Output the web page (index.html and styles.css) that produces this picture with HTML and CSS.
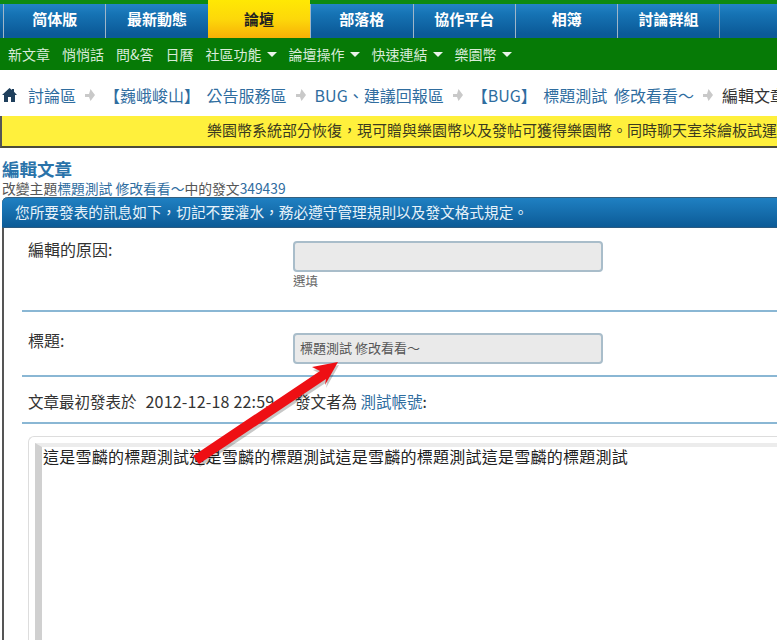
FILE: index.html
```html
<!DOCTYPE html>
<html lang="zh-Hant">
<head>
<meta charset="utf-8">
<title>編輯文章</title>
<link rel="stylesheet" href="styles.css">
</head>
<body>
<div class="page">
  <nav class="tabs">
    <a class="tab">简体版</a>
    <a class="tab">最新動態</a>
    <a class="tab tab-active">論壇</a>
    <a class="tab">部落格</a>
    <a class="tab">協作平台</a>
    <a class="tab">相簿</a>
    <a class="tab">討論群組</a>
  </nav>
  <nav class="subnav">
    <a>新文章</a>
    <a>悄悄話</a>
    <a>問&amp;答</a>
    <a>日曆</a>
    <a class="menu">社區功能<i class="caret"></i></a>
    <a class="menu">論壇操作<i class="caret"></i></a>
    <a class="menu">快速連結<i class="caret"></i></a>
    <a class="menu">樂園幣<i class="caret"></i></a>
  </nav>
  <div class="crumbs">
    <svg class="home" width="15" height="14" viewBox="0 0 15 14"><path d="M7.5 0 0 7h2v7h4V9h3v5h4V7h2L12 3.8V1h-2v1z" fill="#1f3f5c"/></svg>
    <a class="first">討論區</a>
    <svg class="sep" width="10" height="12" viewBox="0 0 10 12"><path d="M5.5 0 10 6l-4.500 6-1.500-4H0V5h4z" fill="#c9c9c9"/></svg>
    <a>【巍峨峻山】 公告服務區</a>
    <svg class="sep" width="10" height="12" viewBox="0 0 10 12"><path d="M5.500 0 10 6l-4.500 6-1.500-4H0V5h4z" fill="#c9c9c9"/></svg>
    <a>BUG、建議回報區</a>
    <svg class="sep sep-wide" width="10" height="12" viewBox="0 0 10 12"><path d="M5.500 0 10 6l-4.500 6-1.500-4H0V5h4z" fill="#c9c9c9"/></svg>
    <a>【BUG】 標題測試 修改看看～</a>
    <svg class="sep" width="10" height="12" viewBox="0 0 10 12"><path d="M5.500 0 10 6l-4.500 6-1.500-4H0V5h4z" fill="#c9c9c9"/></svg>
    <span class="current">編輯文章</span>
  </div>
  <div class="notice">樂園幣系統部分恢復，現可贈與樂園幣以及發帖可獲得樂園幣。同時聊天室茶繪板試運</div>
  <h1 class="title">編輯文章</h1>
  <p class="subtitle">改變主題<a>標題測試 修改看看～</a>中的發文<a>349439</a></p>
  <section class="panel">
    <header class="panel-head">您所要發表的訊息如下，切記不要灌水，務必遵守管理規則以及發文格式規定。</header>
    <div class="panel-body">
      <div class="row row-reason">
        <label class="row-label">編輯的原因:</label>
        <div class="field-wrap">
          <div class="field"></div>
          <div class="hint">選填</div>
        </div>
      </div>
      <div class="row row-title">
        <label class="row-label">標題:</label>
        <div class="field-wrap">
          <div class="field field-text">標題測試 修改看看～</div>
        </div>
      </div>
      <div class="row row-meta">
        <span class="meta-date">文章最初發表於<span class="date-val">2012-12-18 22:59</span></span>
        <span>發文者為 <a>測試帳號</a>:</span>
      </div>
      <div class="editor">
        <div class="editor-inner">這是雪麟的標題測試這是雪麟的標題測試這是雪麟的標題測試這是雪麟的標題測試</div>
      </div>
    </div>
  </section>
  <svg class="arrow" width="777" height="640" viewBox="0 0 777 640">
    <g fill="#000" opacity=".22" transform="translate(1 3)">
      <path d="M193 456 320 371 312 367 338 362 325 385 326 379 199 464z"/>
    </g>
    <path d="M193 456 320 371 312 367 338 362 325 385 326 379 199 464z" fill="#ee0f14"/>
  </svg>
</div>
</body>
</html>
```
FILE: styles.css
```css
* { box-sizing: border-box; }
html, body { margin: 0; padding: 0; background: #fff; }
body {
  font-family: "Noto Sans CJK TC", "Liberation Sans", sans-serif;
  color: #333;
  overflow: hidden;
}
.page { position: relative; width: 777px; height: 640px; overflow: hidden; }
a { color: #2a6a9e; text-decoration: none; }

.tabs {
  display: flex;
  height: 38px;
  padding: 4px 0 0 3px;
  background: linear-gradient(#0e8a12 0, #0e8a12 4px, #2284c6 4px, #1673b4 14px, #0b5a98 34px, #0b5a98 100%);
}
.tab {
  width: 102.4px;
  height: 34px;
  border-left: 1px solid #9fb6c8;
  color: #fff;
  font-size: 15px;
  font-weight: 700;
  line-height: 30px;
  text-align: center;
  flex: none;
}
.tab:last-child { border-right: 1px solid #6f93ad; }
.tab-active {
  margin-top: -4px;
  height: 38px;
  line-height: 38px;
  border-left: 0;
  color: #222;
  background: linear-gradient(#ffe804, #fdd80a 50%, #f7b006);
}

.subnav {
  display: flex;
  align-items: center;
  gap: 12px;
  height: 32px;
  padding-left: 8px;
  background: #067a06;
}
.subnav a { color: #d9ecd9; font-size: 14px; line-height: 20px; }
.menu { display: flex; align-items: center; gap: 5px; }
.caret {
  width: 0;
  height: 0;
  border: 5px solid transparent;
  border-top: 5px solid #eaf4ea;
  border-bottom: 0;
}

.crumbs {
  display: flex;
  align-items: center;
  height: 46px;
  padding: 4px 0 0 2px;
  font-size: 16px;
  word-spacing: 3px;
  white-space: nowrap;
}
.home { flex: none; }
.first { margin-left: 11px; }
.sep { flex: none; margin: 0 9px 0 9px; }
.sep-wide { margin-right: 9px; }
.crumbs a { color: #2f6d9f; }
.current { color: #333; }

.notice {
  height: 32px;
  padding-left: 205px;
  background: #fff03c;
  border-left: 2px solid #555;
  border-bottom: 2px solid #4c4c3a;
  font-size: 15px;
  line-height: 28px;
  color: #3a3a20;
  white-space: nowrap;
  overflow: hidden;
}

.title {
  margin: 10px 0 0 2px;
  height: 21px;
  font-size: 17.5px;
  font-weight: 700;
  line-height: 21px;
  color: #2a73aa;
}
.subtitle {
  margin: 1px 0 1px 2px;
  height: 16px;
  font-size: 13.8px;
  line-height: 16px;
  color: #555;
}
.subtitle a { color: #2f6d9f; }

.panel {
  margin: 0 0 0 2px;
  border-left: 2px solid #555;
  border-radius: 6px 0 0 0;
  height: 460px;
}
.panel-head {
  margin-left: -2px;
  height: 31px;
  padding-left: 13px;
  border-top: 1px solid #35607f;
  border-bottom: 1px solid #2a5a80;
  border-radius: 6px 0 0 0;
  background: linear-gradient(#1f80c2, #0c5b97);
  color: #e6f2fa;
  font-size: 14.67px;
  line-height: 27px;
  white-space: nowrap;
}
.panel-body { padding: 0 0 0 18px; }

.row {
  display: flex;
  border-bottom: 2px solid #8ab7d4;
  font-size: 16px;
  color: #333;
}
.row-label { flex: none; width: 271px; padding-left: 6px; }
.field-wrap { width: 310px; }
.field {
  width: 310px;
  height: 31px;
  background: #eaeaea;
  border: 2px solid #a9bdca;
  border-radius: 4px;
}
.field-text {
  padding-left: 5px;
  font-size: 13px;
  line-height: 26px;
  color: #555;
  white-space: nowrap;
}
.hint { font-size: 12.5px; line-height: 18px; color: #666; }

.row-reason { height: 84px; padding-top: 13px; }
.row-reason .row-label { line-height: 22px; margin-top: -3px; }
.row-title { height: 65px; padding-top: 21px; }
.row-title .row-label { line-height: 22px; margin-top: -4px; }
.row-meta { height: 47px; padding: 12px 0 0 6px; line-height: 24px; font-size: 15.5px; }
.row-meta a { color: #2f6d9f; }
.meta-date { width: 267px; flex: none; }
.date-val { margin-left: 9px; font-size: 16px; letter-spacing: .2px; }

.editor {
  margin: 12px 0 0 6px;
  padding: 6px 0 0 6px;
  height: 300px;
  border: 1px solid #ddd;
  border-right: 0;
  border-radius: 6px 0 0 0;
}
.editor-inner {
  height: 100%;
  padding: 0 0 0 1px;
  border-left: 7px solid #d0d0d0;
  border-top: 4px solid #ececec;
  font-size: 16px;
  letter-spacing: .25px;
  line-height: 18px;
  color: #222;
  white-space: nowrap;
}

.arrow { position: absolute; left: 0; top: 0; pointer-events: none; }
```
